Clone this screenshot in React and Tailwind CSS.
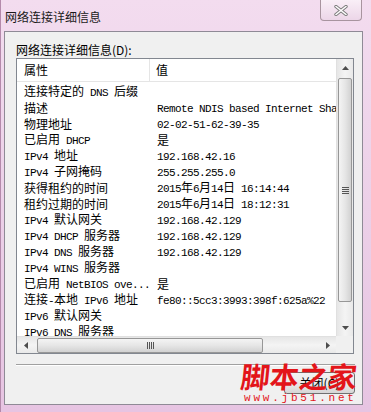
const CJK = /([\u3000-\u9fff\uff00-\uffef]+)/

// split a label into CJK and half-width runs so the latin part gets SimSun-like 6px advance
function Mixed({ text }) {
  return text.split(CJK).map((part, i) => {
    if (!part) return null
    if (CJK.test(part)) {
      return <span key={i} className="font-['Noto_Sans_CJK_SC',sans-serif] text-[12px]">{part}</span>
    }
    return (
      <span key={i} className="font-['Liberation_Mono',monospace] text-[11px] tracking-[-0.6px] whitespace-pre">{part}</span>
    )
  })
}

const ROWS = [
  ['连接特定的 DNS 后缀', ''],
  ['描述', 'Remote NDIS based Internet Sharing Device'],
  ['物理地址', '02-02-51-62-39-35'],
  ['已启用 DHCP', '是'],
  ['IPv4 地址', '192.168.42.16'],
  ['IPv4 子网掩码', '255.255.255.0'],
  ['获得租约的时间', '2015年6月14日 16:14:44'],
  ['租约过期的时间', '2015年6月14日 18:12:31'],
  ['IPv4 默认网关', '192.168.42.129'],
  ['IPv4 DHCP 服务器', '192.168.42.129'],
  ['IPv4 DNS 服务器', '192.168.42.129'],
  ['IPv4 WINS 服务器', ''],
  ['已启用 NetBIOS ove...', '是'],
  ['连接-本地 IPv6 地址', 'fe80::5cc3:3993:398f:625a%22'],
  ['IPv6 默认网关', ''],
  ['IPv6 DNS 服务器', ''],
]

function Arrow({ dir }) {
  const pts = {
    up: '0,4 3.5,0 7,4',
    down: '0,0 3.5,4 7,0',
    left: '4,0 0,3.5 4,7',
    right: '0,0 4,3.5 0,7',
  }[dir]
  const vertical = dir === 'up' || dir === 'down'
  return (
    <svg width={vertical ? 7 : 4} height={vertical ? 4 : 7} viewBox={vertical ? '0 0 7 4' : '0 0 4 7'}>
      <polygon points={pts} fill="#4d4d4d" />
    </svg>
  )
}

function VScroll() {
  return (
    <div className="w-[17px] shrink-0 flex flex-col bg-gradient-to-r from-[#e6e6e6] via-[#f4f4f4] to-[#e9e9e9] border-l border-[#e0e0e0]">
      <div className="h-[17px] flex items-center justify-center">
        <Arrow dir="up" />
      </div>
      <div className="mx-[1px] mt-[2px] h-[224px] rounded-[2px] border border-[#979797] bg-gradient-to-r from-[#f4f4f4] via-[#e6e6e6] to-[#d2d2d2] flex items-center justify-center">
        <div className="flex flex-col gap-[1px]">
          <div className="w-[7px] h-[1px] bg-[#555]" />
          <div className="w-[7px] h-[1px] bg-[#555]" />
          <div className="w-[7px] h-[1px] bg-[#555]" />
          <div className="w-[7px] h-[1px] bg-[#555]" />
        </div>
      </div>
      <div className="flex-1" />
      <div className="h-[17px] flex items-center justify-center">
        <Arrow dir="down" />
      </div>
    </div>
  )
}

function HScroll() {
  return (
    <div className="flex-1 h-[17px] flex items-center bg-gradient-to-b from-[#e6e6e6] via-[#f4f4f4] to-[#e9e9e9] border-t border-[#e0e0e0]">
      <div className="w-[17px] flex items-center justify-center">
        <Arrow dir="left" />
      </div>
      <div className="ml-[3px] w-[226px] h-[15px] rounded-[2px] border border-[#979797] bg-gradient-to-b from-[#f4f4f4] via-[#e6e6e6] to-[#d2d2d2] flex items-center justify-center">
        <div className="flex gap-[1px]">
          <div className="w-[1px] h-[7px] bg-[#555]" />
          <div className="w-[1px] h-[7px] bg-[#555]" />
          <div className="w-[1px] h-[7px] bg-[#555]" />
          <div className="w-[1px] h-[7px] bg-[#555]" />
        </div>
      </div>
      <div className="flex-1" />
      <div className="w-[17px] flex items-center justify-center">
        <Arrow dir="right" />
      </div>
    </div>
  )
}

export default function App() {
  return (
    <div className="relative w-[371px] h-[412px] overflow-hidden bg-gradient-to-b from-[#f3dcef] via-[#ecd0e8] to-[#e7c4e2] border-l border-[#b48aab] text-black">
      {/* Title bar */}
      <div className="h-[31px] flex items-start justify-between">
        <div className="pt-[9px] pl-[4px] text-[12px] leading-[16px] font-['Noto_Sans_CJK_SC',sans-serif] text-[#1a1a1a]">
          网络连接详细信息
        </div>
        <div className="mr-[9px] w-[42px] h-[21px] rounded-b-[4px] border border-t-0 border-[#a8949f] bg-gradient-to-b from-[#f9eff7] to-[#ecd6e8] flex items-center justify-center">
          <svg width="14" height="11" viewBox="0 0 14 11">
            <path d="M2 1.5 L12 9.5 M12 1.5 L2 9.5" stroke="#7a7a7a" strokeWidth="3.4" strokeLinecap="round" />
            <path d="M2 1.5 L12 9.5 M12 1.5 L2 9.5" stroke="#ffffff" strokeWidth="1.6" strokeLinecap="round" />
          </svg>
        </div>
      </div>

      {/* Client area */}
      <div className="ml-[3px] mr-[8px] h-[374px] border border-[#8f8a96] bg-[#f0f0f0] pl-[11px] pt-[10px] flex flex-col">
        <div className="h-[16px] leading-[16px] text-[12px] font-['Noto_Sans_CJK_SC',sans-serif]">网络连接详细信息(D):</div>

        {/* List view */}
        <div className="w-[338px] h-[296px] border border-[#828790] bg-white flex flex-col">
          <div className="flex-1 flex min-h-0">
            <div className="flex-1 min-w-0 overflow-hidden">
              <div className="h-[23px] flex border-b border-[#e5e5e5] text-[12px] font-['Noto_Sans_CJK_SC',sans-serif]">
                <div className="w-[133px] shrink-0 pl-[7px] flex items-center border-r border-[#e5e5e5]">属性</div>
                <div className="pl-[6px] flex items-center">值</div>
              </div>
              <div className="pt-[1px]">
                {ROWS.map(([k, v]) => (
                  <div key={k} className="h-[16px] flex items-center whitespace-nowrap">
                    <div className="w-[134px] shrink-0 pl-[7px] overflow-hidden leading-[16px]"><Mixed text={k} /></div>
                    <div className="pl-[6px] shrink-0 leading-[16px]"><Mixed text={v} /></div>
                  </div>
                ))}
              </div>
            </div>
            <VScroll />
          </div>
          <div className="flex">
            <HScroll />
            <div className="w-[17px] h-[17px] bg-[#f0f0f0]" />
          </div>
        </div>

        {/* Separator */}
        <div className="mt-[10px] w-[339px] border-t border-[#a0a0a0] border-b border-b-white" />

        {/* Button */}
        <div className="mt-[6px] flex justify-end pr-[7px]">
          <div className="w-[71px] h-[22px] rounded-[3px] border border-[#707070] bg-gradient-to-b from-[#f2f2f2] via-[#ebebeb] to-[#d6d6d6] flex items-center justify-center text-[12px] font-['Noto_Sans_CJK_SC',sans-serif]">
            关闭(C)
          </div>
        </div>
      </div>

      {/* Watermark */}
      <div className="absolute left-[240px] top-[360px] pointer-events-none">
        <div className="w-[116px] flex justify-between text-[29px] leading-[30px] font-bold text-[#e3151a] font-['Noto_Sans_CJK_SC',sans-serif] -skew-x-6">
          <span>脚</span>
          <span>本</span>
          <span>之</span>
          <span>家</span>
        </div>
        <div className="ml-[3px] mt-[3px] w-[110px] flex justify-between text-[11px] leading-[10px] text-[#e3151a] font-['Liberation_Mono',monospace]">
          {'www.jb51.net'.split('').map((c, i) => <span key={i}>{c}</span>)}
        </div>
      </div>
    </div>
  )
}
